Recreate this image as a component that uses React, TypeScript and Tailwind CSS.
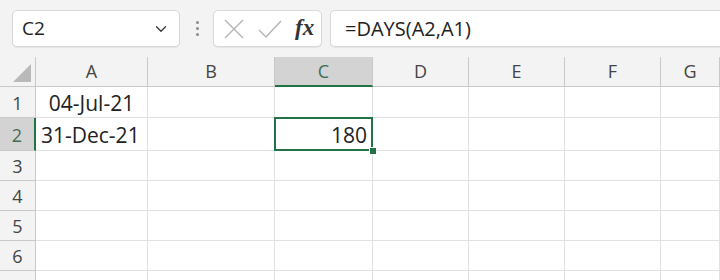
import { ChevronDown } from "lucide-react"

const cols = ["A", "B", "C", "D", "E", "F", "G"]
const rowHeights = ["h-[31px]", "h-[33px]", "h-[30px]", "h-[30px]", "h-[30px]", "h-[30px]", "h-[30px]"]

function Toolbar() {
  return (
    <div className="flex h-[57px] items-center bg-[#f3f3f3] pl-3 font-['Open_Sans',sans-serif]">
      <div className="flex h-[37px] w-[168px] items-center justify-between rounded-[5px] border border-[#d9d9d9] bg-white pl-[9px] pr-[9px] shadow-[0_1px_1px_rgba(0,0,0,0.06)]">
        <span className="text-[19px] text-[#222]">C2</span>
        <ChevronDown size={18} strokeWidth={1.6} className="text-[#333]" />
      </div>
      <div className="ml-[16px] mr-[14px] flex flex-col gap-[3px]">
        <span className="h-[3px] w-[3px] rounded-full bg-[#8a8a8a]" />
        <span className="h-[3px] w-[3px] rounded-full bg-[#8a8a8a]" />
        <span className="h-[3px] w-[3px] rounded-full bg-[#8a8a8a]" />
      </div>
      <div className="flex h-[37px] w-[109px] items-center rounded-[5px] border border-[#d9d9d9] bg-white pl-[9px] shadow-[0_1px_1px_rgba(0,0,0,0.06)]">
        <svg width="22" height="22" viewBox="0 0 22 22" fill="none" stroke="#b4b4b4" strokeWidth="1.4">
          <path d="M2 2L20 20M20 2L2 20" />
        </svg>
        <svg width="26" height="20" viewBox="0 0 26 20" fill="none" stroke="#b4b4b4" strokeWidth="1.4" className="ml-[12px]">
          <path d="M2 11L9 18L24 2" />
        </svg>
        <span className="ml-[12px] font-['Liberation_Serif',serif] text-[23px] font-semibold italic text-[#333]">fx</span>
      </div>
      <div className="ml-[8px] flex h-[37px] flex-1 items-center rounded-l-[5px] border border-r-0 border-[#d9d9d9] bg-white pl-[14px] shadow-[0_1px_1px_rgba(0,0,0,0.06)]">
        <span className="text-[20px] text-[#222]">=DAYS(A2,A1)</span>
      </div>
    </div>
  )
}

function Grid() {
  return (
    <div className="grid grid-cols-[36px_112px_127px_98px_96px_96px_96px_59px] font-['Open_Sans',sans-serif] text-[21px] text-[#222]">
      <div className="flex h-[30px] items-end justify-end border-b border-r border-[#c8c8c8] bg-[#f3f3f3] pb-[4px] pr-[4px]">
        <svg width="18" height="18" viewBox="0 0 18 18">
          <path d="M18 0V18H0Z" fill="#b9b9b9" />
        </svg>
      </div>
      {cols.map((c) =>
        c === "C" ? (
          <div key={c} className="flex h-[30px] items-center justify-center border-b-2 border-r border-b-[#217346] border-r-[#c8c8c8] bg-[#d3d3d3] text-[18px] text-[#3f6e55]">
            {c}
          </div>
        ) : (
          <div key={c} className="flex h-[30px] items-center justify-center border-b border-r border-[#c8c8c8] bg-[#f3f3f3] text-[18px] text-[#444]">
            {c}
          </div>
        )
      )}
      {rowHeights.map((h, i) => {
        const r = i + 1
        return [
          r === 2 ? (
            <div key={`h${r}`} className={`${h} flex items-center justify-center border-b border-r-2 border-b-[#c8c8c8] border-r-[#217346] bg-[#d3d3d3] pt-[2px] text-[18px] text-[#3f6e55]`}>
              {r}
            </div>
          ) : (
            <div key={`h${r}`} className={`${h} flex items-center justify-center border-b border-r border-[#c8c8c8] bg-[#f3f3f3] pt-[2px] text-[18px] text-[#444]`}>
              {r < 7 ? r : ""}
            </div>
          ),
          ...cols.map((c) => (
            <div key={`${c}${r}`} className={`${h} relative flex items-center border-b border-r border-[#e1e1e1] px-[5px] pt-[4px]`}>
              {c === "A" && r === 1 && <span className="w-full text-center">04-Jul-21</span>}
              {c === "A" && r === 2 && <span>31-Dec-21</span>}
              {c === "C" && r === 2 && (
                <>
                  <span className="w-full text-right">180</span>
                  <div className="absolute -left-[1px] -top-[1px] bottom-[-1px] right-[-1px] z-10 border-2 border-[#217346]" />
                  <div className="absolute -bottom-[5px] -right-[5px] z-20 h-[8px] w-[8px] border border-white bg-[#217346]" />
                </>
              )}
            </div>
          )),
        ]
      })}
    </div>
  )
}

export default function App() {
  return (
    <div className="h-[280px] w-[720px] overflow-hidden bg-white">
      <Toolbar />
      <Grid />
    </div>
  )
}
